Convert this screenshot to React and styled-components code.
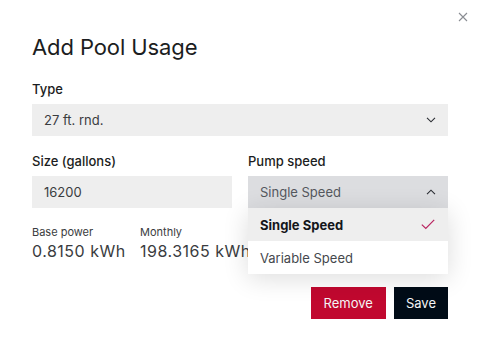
import React, { useState } from 'react';
import styled, { createGlobalStyle } from 'styled-components';

const GlobalStyle = createGlobalStyle`
  html, body {
    margin: 0;
    padding: 0;
    background: #ffffff;
    font-family: Inter, "Noto Sans", sans-serif;
    color: #1b1d21;
  }
`;

const Dialog = styled.div`
  position: relative;
  width: 479px;
  height: 351px;
  box-sizing: border-box;
  padding: 33px 31px 0 32px;
  background: #fff;
`;

const CloseButton = styled.button`
  position: absolute;
  top: 11px;
  right: 10px;
  width: 12px;
  height: 12px;
  padding: 0;
  border: 0;
  background: none;
  display: flex;
  align-items: center;
  justify-content: center;
`;

const Title = styled.h1`
  margin: 0 0 20px;
  font-size: 22px;
  line-height: 28px;
  font-weight: 400;
  letter-spacing: -0.1px;
  color: #1b1d21;
`;

const Field = styled.div`
  display: flex;
  flex-direction: column;
  position: relative;
`;

const Label = styled.label`
  font-size: 13px;
  line-height: 16px;
  font-weight: 500;
  margin-bottom: 7px;
  color: #1b1d21;
`;

const Row = styled.div`
  display: grid;
  grid-template-columns: 1fr 1fr;
  gap: 16px;
  margin-top: 17px;
`;

const Box = styled.div`
  height: 32px;
  box-sizing: border-box;
  padding: 0 12px;
  display: flex;
  align-items: center;
  justify-content: space-between;
  background: ${p => (p.$open ? '#dcdde0' : '#eeeeee')};
  font-size: 13px;
  color: ${p => (p.$open ? '#55585e' : '#3a3c40')};
`;

const Menu = styled.ul`
  position: absolute;
  top: 100%;
  left: 0;
  right: 0;
  margin: 0;
  padding: 0;
  list-style: none;
  background: #fff;
  box-shadow: 0 4px 26px rgba(0, 0, 0, 0.14);
  z-index: 2;
`;

const MenuItem = styled.li`
  height: 33px;
  box-sizing: border-box;
  padding: 0 13px 0 12px;
  display: flex;
  align-items: center;
  justify-content: space-between;
  font-size: 13px;
  font-weight: ${p => (p.$selected ? 700 : 400)};
  background: ${p => (p.$selected ? '#eeeeee' : '#ffffff')};
  color: ${p => (p.$selected ? '#14161a' : '#45484d')};
`;

const Stats = styled.div`
  display: flex;
  gap: 17px;
  margin-top: 17px;
`;

const Stat = styled.div`
  display: flex;
  flex-direction: column;
  width: 91px;
  white-space: nowrap;
`;

const StatLabel = styled.span`
  font-size: 11px;
  line-height: 14px;
  color: #3a3c40;
`;

const StatValue = styled.span`
  font-size: 16px;
  line-height: 20px;
  letter-spacing: 0.5px;
  margin-top: 2px;
  color: #3a3c40;
`;

const Actions = styled.div`
  display: flex;
  justify-content: flex-end;
  gap: 8px;
  margin-top: 26px;
`;

const Button = styled.button`
  height: 32px;
  border: 0;
  padding: 0 ${p => (p.$danger ? 13 : 12)}px;
  font-family: inherit;
  font-size: 13px;
  color: #f4f4f6;
  background: ${p => (p.$danger ? '#c1082f' : '#010c17')};
`;

const Chevron = ({ up }) => (
  <svg width="10" height="6" viewBox="0 0 10 6" fill="none">
    <path
      d={up ? 'M1 5.2L5 1.2L9 5.2' : 'M1 0.8L5 4.8L9 0.8'}
      stroke="#2a2d33"
      strokeWidth="1.1"
    />
  </svg>
);

const Check = () => (
  <svg width="14" height="11" viewBox="0 0 14 11" fill="none">
    <path d="M0.8 5.6L4.8 9.4L13.2 0.8" stroke="#b8235f" strokeWidth="1.2" />
  </svg>
);

const speeds = ['Single Speed', 'Variable Speed'];

export default function App() {
  const [speed] = useState('Single Speed');

  return (
    <>
      <GlobalStyle />
      <Dialog>
        <CloseButton aria-label="Close">
          <svg width="10" height="10" viewBox="0 0 10 10">
            <path d="M1 1L9 9M9 1L1 9" stroke="#8a8d93" strokeWidth="1.1" />
          </svg>
        </CloseButton>
        <Title>Add Pool Usage</Title>

        <Field>
          <Label>Type</Label>
          <Box>
            <span>27 ft. rnd.</span>
            <Chevron />
          </Box>
        </Field>

        <Row>
          <Field>
            <Label>Size (gallons)</Label>
            <Box>16200</Box>
          </Field>
          <Field>
            <Label>Pump speed</Label>
            <Box $open>
              <span>{speed}</span>
              <Chevron up />
            </Box>
            <Menu>
              {speeds.map(s => (
                <MenuItem key={s} $selected={s === speed}>
                  <span>{s}</span>
                  {s === speed && <Check />}
                </MenuItem>
              ))}
            </Menu>
          </Field>
        </Row>

        <Stats>
          <Stat>
            <StatLabel>Base power</StatLabel>
            <StatValue>0.8150 kWh</StatValue>
          </Stat>
          <Stat>
            <StatLabel>Monthly</StatLabel>
            <StatValue>198.3165 kWh</StatValue>
          </Stat>
        </Stats>

        <Actions>
          <Button $danger>Remove</Button>
          <Button>Save</Button>
        </Actions>
      </Dialog>
    </>
  );
}
